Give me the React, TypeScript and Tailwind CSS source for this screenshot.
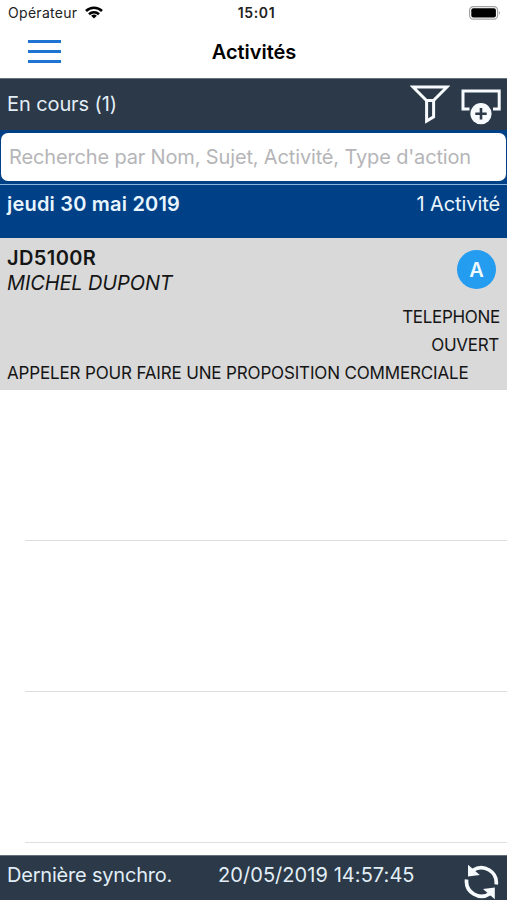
const Wifi = () => (
  <svg className="ml-[8px] mt-[6px] h-[13px] w-[18px] shrink-0" viewBox="0 0 18 13" fill="none" stroke="#000" strokeWidth="2.6">
    <path d="M1 5 A11.5 11.5 0 0 1 17 5" />
    <path d="M4 8.3 A7.2 7.2 0 0 1 14 8.3" />
    <path d="M9 12.6 L6.1 9.8 A4.2 4.2 0 0 1 11.9 9.8 Z" fill="#000" stroke="none" />
  </svg>
);

const Battery = () => (
  <svg className="mt-[6px] h-[14px] w-[32px] shrink-0" viewBox="0 0 32 14">
    <rect x="0.6" y="0.6" width="28" height="12.6" rx="3.6" fill="none" stroke="#a3a3a3" strokeWidth="1.2" />
    <rect x="2.3" y="2.2" width="24.6" height="9.4" rx="2" fill="#000" />
    <path d="M30 5 Q31.6 6.9 30 8.8 Z" fill="#777" />
  </svg>
);

const Funnel = () => (
  <svg className="mt-[5px] h-[41px] w-[40px] shrink-0" viewBox="0 0 40 41" fill="none" stroke="#f7fbfd" strokeWidth="3">
    <path d="M3 3 H37 L23.5 16.5 H16.5 Z" />
    <path d="M16.6 16 V37 L23.6 32.8 V16" />
  </svg>
);

const AddFrame = () => (
  <svg className="ml-[11px] mt-[9px] h-[38px] w-[40px] shrink-0" viewBox="0 0 40 38">
    <path d="M8.5 21 H2 V3 H38.2 V21 H32" fill="none" stroke="#f7fbfd" strokeWidth="3" />
    <circle cx="20" cy="25.7" r="10.6" fill="#f7fbfd" />
    <path d="M20 20 V31.4 M14.3 25.7 H25.7" stroke="#2b3948" strokeWidth="2.6" />
  </svg>
);

const Sync = () => (
  <svg className="mr-[8px] mt-[8px] h-[37px] w-[35px] shrink-0" viewBox="464 863 35 37" fill="none" stroke="#f7fbfd" strokeWidth="3.7">
    <path d="M473 869.3 A15 15 0 0 1 496.2 883.5" />
    <path d="M489.8 892.7 A15 15 0 0 1 466.6 878.5" />
    <path d="M468 863.8 L468 875.4 L479.8 874 Z" fill="#f7fbfd" stroke="none" />
    <path d="M494.8 898.2 L494.8 886.6 L483 888 Z" fill="#f7fbfd" stroke="none" />
  </svg>
);

export default function App() {
  return (
    <div className="flex h-[900px] w-[507px] flex-col overflow-hidden bg-white font-['Inter','Liberation_Sans',sans-serif] text-black">
      <header className="h-[78px] shrink-0">
        <div className="grid h-[27px] grid-cols-3">
          <div className="flex pl-[8px]">
            <span className="text-[14px] leading-[26px] tracking-[0.3px] text-[#222]">Opérateur</span>
            <Wifi />
          </div>
          <div className="pl-[6px] text-center text-[14px] font-semibold leading-[26px] tracking-[0.6px] text-[#222]">15:01</div>
          <div className="flex justify-end pr-[6px]"><Battery /></div>
        </div>
        <div className="grid h-[51px] grid-cols-3">
          <div className="flex flex-col gap-[7px] pl-[28px] pt-[13px]">
            <i className="h-[3px] w-[33px] bg-[#1f74d2]" />
            <i className="h-[3px] w-[33px] bg-[#1f74d2]" />
            <i className="h-[3px] w-[33px] bg-[#1f74d2]" />
          </div>
          <h1 className="pl-px text-center text-[20px] font-semibold leading-[50px] tracking-[-0.05px]">Activités</h1>
        </div>
      </header>

      <section className="flex h-[52px] shrink-0 border-t border-[#65717d] bg-[#2b3948] pl-[7px] pr-[6px] text-[#e2eef7]">
        <span className="mr-auto text-[20px] leading-[50px] tracking-[-0.1px]">En cours (1)</span>
        <Funnel />
        <AddFrame />
      </section>

      <section className="h-[108px] shrink-0 bg-[#004086]">
        <div className="px-px pt-[3px]">
          <input
            className="block h-[48px] w-full rounded-[7px] bg-white pb-0 pl-[8px] text-[20px] tracking-[-0.15px] placeholder:text-[#b5b5b8] placeholder:opacity-100"
            placeholder="Recherche par Nom, Sujet, Activité, Type d'action"
          />
        </div>
        <div className="mt-[3px] flex justify-between border-t border-[#8bb4dc] pl-[7px] pr-[7px] text-[20px] leading-[38px] text-[#e8f5ff]">
          <strong className="font-semibold tracking-[0.2px]">jeudi 30 mai 2019</strong>
          <span className="tracking-[-0.1px]">1 Activité</span>
        </div>
      </section>

      <article className="h-[152px] shrink-0 bg-[#d9d9d9] px-[7px] text-[#151515]">
        <div className="flex h-[65px] justify-between">
          <div className="pt-[8px] text-[20px] leading-[25px]">
            <div className="font-semibold tracking-[0.4px]">JD5100R</div>
            <div className="italic tracking-[-0.12px]">MICHEL DUPONT</div>
          </div>
          <div className="mr-[4px] mt-[12px] flex h-[39px] w-[39px] items-center justify-center rounded-full bg-[#249cf0] text-[20px] font-semibold text-[#eefaff]">A</div>
        </div>
        <div className="text-right text-[17px] leading-[28px] tracking-[-0.3px]">TELEPHONE</div>
        <div className="pr-px text-right text-[17px] leading-[28px] tracking-[-0.3px]">OUVERT</div>
        <div className="whitespace-nowrap text-[17px] leading-[28px] tracking-[-0.155px]">APPELER POUR FAIRE UNE PROPOSITION COMMERCIALE</div>
      </article>

      <main className="h-[465px] shrink-0 pl-[25px]">
        <div className="h-[151px] border-b border-[#dedede]" />
        <div className="h-[151px] border-b border-[#dedede]" />
        <div className="h-[151px] border-b border-[#dedede]" />
      </main>

      <footer className="flex h-[45px] shrink-0 border-t border-[#65717d] bg-[#2b3948] pl-[7px] text-[20px] leading-[38px] text-[#e2eef7]">
        <span className="w-[211px] tracking-[-0.2px]">Dernière synchro.</span>
        <span className="mr-auto tracking-[0.06px]">20/05/2019 14:57:45</span>
        <Sync />
      </footer>
    </div>
  );
}
